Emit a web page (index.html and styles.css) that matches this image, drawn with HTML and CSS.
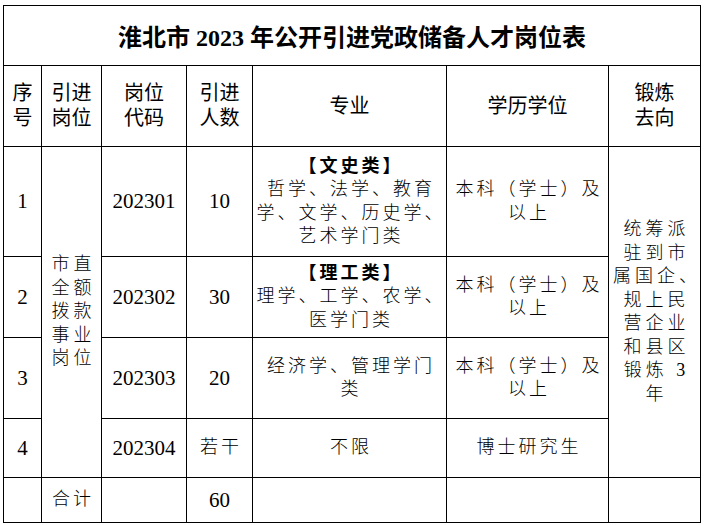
FILE: index.html
```html
<!DOCTYPE html>
<html lang="zh-CN">
<head>
<meta charset="utf-8">
<title>淮北市 2023 年公开引进党政储备人才岗位表</title>
<link rel="stylesheet" href="styles.css">
</head>
<body>
<table class="sheet">
  <colgroup>
    <col class="c1"><col class="c2"><col class="c3"><col class="c4"><col class="c5"><col class="c6"><col class="c7">
  </colgroup>
  <tr class="r-title">
    <td colspan="7" class="title">淮北市 2023 年公开引进党政储备人才岗位表</td>
  </tr>
  <tr class="r-head">
    <td class="head">序<br>号</td>
    <td class="head">引进<br>岗位</td>
    <td class="head">岗位<br>代码</td>
    <td class="head">引进<br>人数</td>
    <td class="head">专业</td>
    <td class="head">学历学位</td>
    <td class="head">锻炼<br>去向</td>
  </tr>
  <tr class="r1">
    <td class="num">1</td>
    <td rowspan="4" class="txt wide">市直<br>全额<br>拨款<br>事业<br>岗位</td>
    <td class="num">202301</td>
    <td class="num">10</td>
    <td class="txt"><b class="cat">【文史类】</b><br>哲学、法学、教育<br>学、文学、历史学、<br>艺术学门类</td>
    <td class="txt">本科（学士）及<br>以上</td>
    <td rowspan="4" class="txt wide">统筹派<br>驻到市<br>属国企、<br>规上民<br>营企业<br>和县区<br>锻炼 3<br>年</td>
  </tr>
  <tr class="r2">
    <td class="num">2</td>
    <td class="num">202302</td>
    <td class="num">30</td>
    <td class="txt"><b class="cat">【理工类】</b><br>理学、工学、农学、<br>医学门类</td>
    <td class="txt">本科（学士）及<br>以上</td>
  </tr>
  <tr class="r3">
    <td class="num">3</td>
    <td class="num">202303</td>
    <td class="num">20</td>
    <td class="txt">经济学、管理学门<br>类</td>
    <td class="txt">本科（学士）及<br>以上</td>
  </tr>
  <tr class="r4">
    <td class="num">4</td>
    <td class="num">202304</td>
    <td class="txt">若干</td>
    <td class="txt">不限</td>
    <td class="txt">博士研究生</td>
  </tr>
  <tr class="r-total">
    <td></td>
    <td class="txt">合计</td>
    <td></td>
    <td class="num">60</td>
    <td></td>
    <td></td>
    <td></td>
  </tr>
</table>
</body>
</html>
```
FILE: styles.css
```css
html, body {
  margin: 0;
  padding: 0;
  background: #fff;
}
body {
  padding: 5px 0 0 3px;
  color: #000;
}
.sheet {
  border-collapse: collapse;
  table-layout: fixed;
  width: 697px;
}
.c1 { width: 38px; }
.c2 { width: 60px; }
.c3 { width: 85px; }
.c4 { width: 66px; }
.c5 { width: 194px; }
.c6 { width: 162px; }
.c7 { width: 92px; }
.sheet td {
  border: 1px solid #000;
  padding: 0;
  text-align: center;
  vertical-align: middle;
  white-space: nowrap;
}
.r-title { height: 60px; }
.r-head { height: 81px; }
.r1 { height: 110px; }
.r2 { height: 81px; }
.r3 { height: 81px; }
.r4 { height: 59px; }
.r-total { height: 45px; }
.title {
  font-family: "Liberation Serif", "Noto Sans CJK SC", serif;
  font-weight: 700;
  font-size: 24px;
  letter-spacing: 0;
}
.head {
  font-family: "Liberation Sans", "Noto Sans CJK SC", sans-serif;
  font-size: 20px;
  line-height: 25px;
}
.num {
  font-family: "Liberation Serif", "Noto Sans CJK SC", serif;
  font-size: 21px;
}
.txt {
  font-family: "Liberation Serif", "Noto Sans CJK SC", serif;
  font-weight: 300;
  font-size: 18px;
  line-height: 23.5px;
  letter-spacing: 3px;
  padding-left: 3px !important;
}
.wide {
  letter-spacing: 4px;
  padding-left: 4px !important;
}
.cat {
  font-weight: 700;
}
```
